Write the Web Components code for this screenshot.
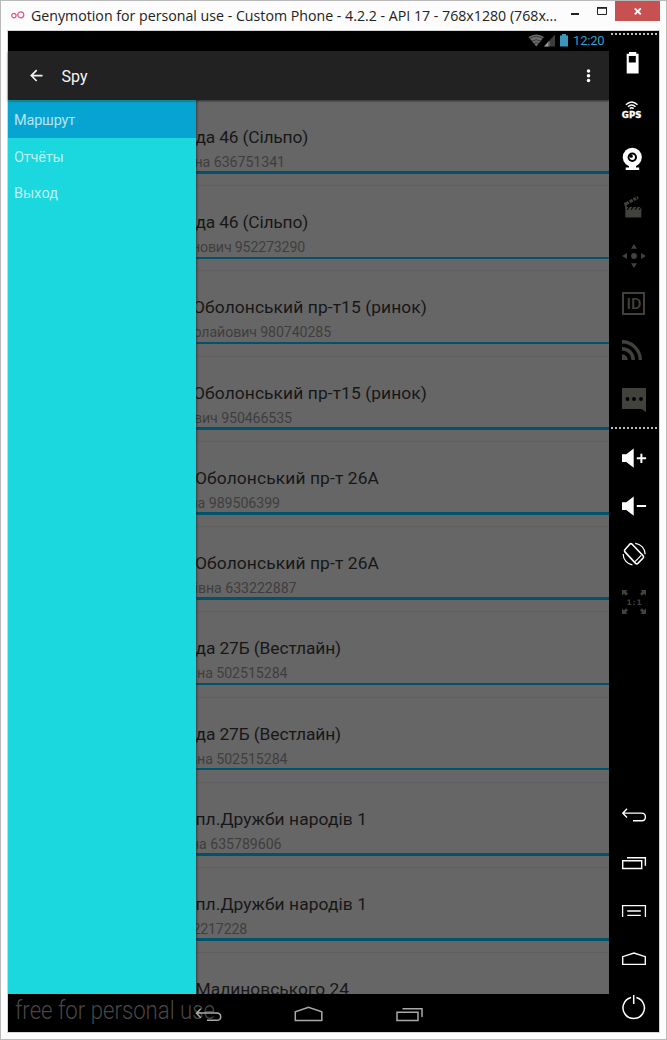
<!DOCTYPE html>
<html lang="ru">
<head>
<meta charset="utf-8">
<title>Genymotion</title>
<style>
html, body { margin: 0; height: 100%; overflow: hidden; background: #fcfcfc; font-family: Roboto, "Liberation Sans", sans-serif; }
</style>
</head>
<body>
<emulator-window></emulator-window>
<script>
function define(name, html, setup) {
  const template = document.createElement('template');
  template.innerHTML = html.trim();
  customElements.define(name, class extends HTMLElement {
    connectedCallback() {
      if (this.shadowRoot) return;
      this.attachShadow({ mode: 'open' }).append(template.content.cloneNode(true));
      if (setup) setup(this, this.shadowRoot);
    }
  });
}

/* A line of text spread to a given width, by tracking or by horizontal scaling. */
define('fit-text', `
<style>
:host { display: block; flex: none; white-space: nowrap; }
span { display: inline-block; white-space: pre; transform-origin: 0 50%; }
</style><span></span>`, (host, root) => {
  const span = root.querySelector('span');
  const text = host.getAttribute('text');
  const width = +host.getAttribute('width');
  span.textContent = text;
  const natural = span.getBoundingClientRect().width;
  if (host.hasAttribute('stretch')) span.style.transform = `scaleX(${width / natural})`;
  else span.style.letterSpacing = (width - natural) / text.length + 'px';
  host.style.width = width + 'px';
});

define('title-bar', `
<style>
:host { display: flex; height: 29px; align-items: flex-start; color: #222; }
.logo { margin: 5px 5px 0 9px; flex: none; }
fit-text { font: 15px/20px "Open Sans", "Noto Sans", sans-serif; margin-top: 4px; }
.buttons { display: flex; margin-left: auto; }
svg { display: block; flex: none; }
.close { background: #c75050; width: 45px; height: 20px; }
.box { width: 45px; height: 20px; }
</style>
<svg class="logo" width="16" height="20" fill="none" stroke="#e0567f" stroke-width="1.2"><circle cx="3.9" cy="9.6" r="2.2"/><circle cx="10.8" cy="8.8" r="3"/></svg>
<fit-text stretch width="526" text="Genymotion for personal use - Custom Phone - 4.2.2 - API 17 - 768x1280 (768x..."></fit-text>
<div class="buttons">
<svg class="box" viewBox="570 1 45 20"><path d="M571 14h8" stroke="#222" stroke-width="2"/><path d="M597.500 8h9v6.500h-9z" fill="none" stroke="#222"/><path d="M597 7.800h10" stroke="#222" stroke-width="1.600"/></svg>
<svg class="close" viewBox="615 1 45 20"><path d="M634.800 8.300l6 6m0-6l-6 6" stroke="#fff" stroke-width="1.900"/></svg>
</div>`);

define('status-bar', `
<style>
:host { display: flex; height: 20px; background: #000; justify-content: flex-end; color: #2f9fcb; }
svg { display: block; }
fit-text { font-size: 13px; line-height: 20px; margin-right: 4.500px; }
</style>
<svg width="45" height="20" viewBox="528 31 45 20">
<path d="M528.600 37q7.600-5 15.400 0l-7.700 9.500z" fill="#6f6f6f"/>
<path d="M529.500 38.600q6.800-4.200 13.600 0M531.600 41.200q4.700-3 9.400 0M533.700 43.500q2.600-1.600 5.200 0" stroke="#1b1b1b" stroke-width=".7" fill="none"/>
<path d="M555 34.500V46.500H544z" fill="#3d3d3d"/><path d="M548.500 41.600V46.500H544z" fill="#9a9a9a"/><path d="M549 41v5.500" stroke="#777"/>
<path d="M562 34h4v1.500h2V46.500h-8V35.500h2z" fill="#3d96be"/>
</svg>
<fit-text width="31.500" text="12:20"></fit-text>`);

define('action-bar', `
<style>
:host { display: flex; height: 49px; background: #222; align-items: center; color: #f5f5f5; box-shadow: 0 1px 2px #0008; position: relative; z-index: 2; }
svg { display: block; }
fit-text { font: 400 16px/20px Roboto, sans-serif; margin-top: 3px; }
.more { margin-left: auto; }
</style>
<svg width="53.500" height="49" viewBox="8 51 53.500 49"><path d="M42.500 75.600H31.500M36.700 70.200l-5.400 5.400 5.400 5.400" fill="none" stroke="#f2f2f2" stroke-width="1.700"/></svg>
<fit-text width="26" text="Spy"></fit-text>
<svg class="more" width="29" height="49" viewBox="580 51 29 49" fill="#fff"><circle cx="588.500" cy="71" r="1.750"/><circle cx="588.500" cy="75.700" r="1.750"/><circle cx="588.500" cy="80.400" r="1.750"/></svg>`);

define('drawer-item', `
<style>
:host { display: flex; height: 36.800px; box-sizing: border-box; align-items: center; padding: 2px 0 0 6px; color: #bdf0f4; font-size: 14.500px; }
:host([selected]) { background: #08a4d1; color: #b5e4f0; }
</style><slot></slot>`);

define('side-drawer', `
<style>
:host { display: block; width: 188px; flex: none; background: #1bd7de; box-shadow: 0 0 2px 1px #0006; position: relative; z-index: 1; padding-top: 1px; box-sizing: border-box; }
</style>
<drawer-item selected><fit-text width="61" text="Маршрут"></fit-text></drawer-item>
<drawer-item><fit-text width="49.500" text="Отчёты"></fit-text></drawer-item>
<drawer-item><fit-text width="44" text="Выход"></fit-text></drawer-item>`);

define('address-row', `
<style>
:host { display: flex; flex-direction: column; height: 85.230px; flex: none; box-sizing: border-box; padding-top: 25px; border-bottom: 1px solid #5f5f5f; }
.line { display: flex; justify-content: flex-end; overflow: hidden; flex: none; }
.title { height: 26px; font-size: 17.400px; line-height: 22px; color: #171717; }
.sub { height: 19.400px; font-size: 14.200px; line-height: 20.500px; color: #3e3e3e; }
.rule { height: 2.500px; background: #00536a; flex: none; }
</style>
<div class="line title"></div><div class="line sub"></div><div class="rule"></div>`, (host, root) => {
  for (const kind of ['title', 'sub']) {
    const [text, start, end] = host.getAttribute(kind).split('|');
    const line = root.querySelector('.' + kind);
    if (!text) continue;
    line.style.width = end - 196 + 'px';
    const fit = document.createElement('fit-text');
    fit.setAttribute('text', text);
    fit.setAttribute('width', end - start);
    line.append(fit);
  }
});

const addresses = [
  ['да 46 (Сільпо)|195.5|308', 'на 636751341|194.5|285'],
  ['да 46 (Сільпо)|195.5|308', 'нович 952273290|192|305'],
  ['Оболонський пр-т15 (ринок)|193|427', 'олайович 980740285|193.5|331'],
  ['Оболонський пр-т15 (ринок)|193|427', 'вич 950466535|194|292'],
  ['Оболонський пр-т 26А|195|379', 'на 989506399|189.5|280'],
  ['Оболонський пр-т 26А|195|379', 'івна 633222887|194.5|296.5'],
  ['да 27Б (Вестлайн)|195.5|341', 'вна 502515284|189|287.5'],
  ['да 27Б (Вестлайн)|195.5|341', 'вна 502515284|189|287.5'],
  ['пл.Дружби народів 1|195.5|367', 'на 635789606|191|281.5'],
  ['пл.Дружби народів 1|195.5|367', '2217228|192.5|247'],
  ['Малиновського 24|195.5|349', ''],
];

define('address-list', `
<style>
:host { display: flex; flex-direction: column; flex: 1; min-width: 0; overflow: hidden; background: #666; padding-top: 1px; }
</style>`, (host, root) => {
  for (const [title, sub] of addresses) {
    const row = document.createElement('address-row');
    row.setAttribute('title', title);
    row.setAttribute('sub', sub);
    root.append(row);
  }
});

define('nav-bar', `
<style>
:host { display: flex; height: 38px; background: #000; color: #474747; position: relative; }
fit-text { font: 300 26px/32px Roboto, sans-serif; margin-left: 6.500px; }
svg { position: absolute; left: 0; top: 0; }
</style>
<fit-text stretch width="200" text="free for personal use"></fit-text>
<svg width="601" height="38" viewBox="8 994 601 38" fill="none" stroke="#a9a9a9" stroke-width="1.500">
<path d="M200.800 1008.800l-4.300 4.400 4.300 4.500M197 1012.900H216.500q4.200 0 4.200 3.800t-4.200 3.600H207"/>
<path d="M295.300 1020.600v-8.800l13.200-4.400 13.300 4.400v8.800z"/>
<path d="M397 1012.200h21v8.200h-21zM402.500 1008.700h19.500v8.300"/>
</svg>`);

const glyphs = {
  battery: '<path fill-rule="evenodd" d="M7 1h7.300v1.700h2.300V22.500H4.700V2.700H7zM6.800 5v6.400h7V5z" fill="#fff"/>',
  gps: '<g fill="none" stroke="#fff" stroke-width="1.400"><path d="M3.900 5.800q5.800-5.600 11.600 0M5.900 7.800q3.800-3.500 7.600 0M7.800 9.600q1.900-1.600 3.800 0"/></g><text x="-.2" y="19.300" textLength="19.600" lengthAdjust="spacingAndGlyphs" font-family="DejaVu Sans, sans-serif" font-weight="bold" font-size="8.300" fill="#fff" stroke="#fff" stroke-width=".3">GPS</text>',
  camera: '<circle cx="10.300" cy="10.300" r="9.500" fill="#fff"/><circle cx="10.300" cy="10.300" r="4.700" fill="#000"/><circle cx="10.300" cy="10.300" r="2.700" fill="#fff"/><circle cx="9.200" cy="9.200" r="1.600" fill="#000"/><path d="M7 19h7v1.500h3.200V23H3.700v-2.500H7z" fill="#fff"/>',
  clapper: '<g fill="#41423b"><path d="M3.300 12H19.300V22.500H3.300z"/><path d="M2 8L15.500 1l1.300 2.800L3.500 10.800z"/><path d="M2 8l1.300 5h2L3.500 8z"/></g><path d="M7.200 11.800l-2 3M11.200 11.800l-2 3M15.200 11.800l-2 3M19 11.800l-2 3M6 5l2 3.500M10 3l2 3.500M13.300 1l2 3.500" stroke="#000" stroke-width="1.100"/>',
  move: '<g fill="#41423b"><circle cx="12" cy="13" r="2.900"/><path d="M12 1l3 4.700H9zM12 25l3-4.700H9zM0 13l5-3v6zM24 13l-5-3v6z"/></g>',
  id: '<path d="M1 2h21v21H1z" fill="none" stroke="#41423b" stroke-width="2"/><text x="4.500" y="18.200" textLength="15" lengthAdjust="spacingAndGlyphs" font-family="Roboto, sans-serif" font-weight="500" font-size="15.500" fill="#41423b">ID</text>',
  rss: '<g fill="none" stroke="#41423b"><path d="M0 2.800A18.300 18.300 0 0 1 18.300 21" stroke-width="3.400"/><path d="M0 9.800A11.300 11.300 0 0 1 11.300 21" stroke-width="3.400"/></g><path d="M0 15.200A5.800 5.800 0 0 1 5.800 21H0z" fill="#41423b"/>',
  chat: '<path d="M0 1h24v24l-4.500-3H0z" fill="#41423b"/><g fill="#000"><circle cx="5.500" cy="12" r="1.900"/><circle cx="12" cy="12" r="1.900"/><circle cx="19" cy="12" r="1.900"/></g>',
  louder: '<path d="M0 8.300h4.300L11.700 2.600v19.200L4.300 16H0z" fill="#fff"/><path d="M14.800 12.300h9.300M19.400 7.700v9.200" stroke="#fff" stroke-width="2"/>',
  quieter: '<path d="M0 8.300h4.300L11.700 2.600v19.200L4.300 16H0z" fill="#fff"/><path d="M14.800 12h9.300" stroke="#fff" stroke-width="2"/>',
  rotate: '<g transform="translate(.7 .4)" fill="none" stroke="#fff"><path d="M9.200 1.600L20.400 13.300q1 1.200 0 2.300L15.200 21q-1.200 1-2.300 0L2.200 9.500q-.9-1.100 0-2.200L7 1.800q1-1 2.200-.2z" stroke-width="1.600"/><path d="M12.300 19.200l6.200-6.300" stroke-width="1.200"/><path d="M12.500.9A11 11 0 0 1 22.500 11.800M.5 11.500A11 11 0 0 0 9.700 22.500" stroke-width="1.200"/></g>',
  scale: '<g fill="#41423b"><path d="M0 0h5.500L4 1.700 6 3.700 4 5.700 2 3.700 0 5.500zM24 0v5.500L22 3.700 20 5.700 18 3.700 20 1.700 18.500 0zM0 24v-5.500L2 20.300l2-2 2 2-2 2L5.500 24zM24 24h-5.500L20 22.300l-2-2 2-2 2 2 2-1.800z"/></g><text x="4.600" y="15" textLength="15" font-family="DejaVu Sans, sans-serif" font-weight="bold" font-size="7.500" fill="#41423b">1:1</text>',
  back: '<path d="M5 5.800L.8 10.200 5 14.600M1.500 10.100H19.500q3.900 0 3.900 3.900t-3.900 3.700H11" fill="none" stroke="#fff" stroke-width="1.400"/>',
  recents: '<path d="M.7 9.700h19v7.800H.7zM5 6.700h18.400v8" fill="none" stroke="#fff" stroke-width="1.400"/>',
  menu: '<path d="M.6 18V6.600h22.800V18M5.300 12h13.500M5.300 16.300h13.500" fill="none" stroke="#fff" stroke-width="1.300"/>',
  home: '<path d="M.7 17.400V9.700L12 6l11.300 3.700v7.700z" fill="none" stroke="#fff" stroke-width="1.400"/>',
  power: '<path d="M9 2.500A10.700 10.700 0 1 0 14.400 2.500M11.700 0v9" fill="none" stroke="#fff" stroke-width="1.500"/>',
};

define('tool-button', `
<style>
:host { display: flex; height: 48px; flex: none; align-items: center; justify-content: center; }
svg { display: block; overflow: visible; }
</style><svg width="24" height="24" viewBox="0 0 24 24"></svg>`, (host, root) => {
  root.querySelector('svg').innerHTML = glyphs[host.getAttribute('icon')];
});

define('tool-strip', `
<style>
:host { display: flex; flex-direction: column; width: 50px; height: 1001px; background: #000; }
.dots { height: 2px; margin: 2px 1px 4px 2px; background: repeating-linear-gradient(90deg, #bdbdbd 0 2px, transparent 2px 4px); flex: none; }
.second { margin: 4px 1px 5px 2px; }
.bottom { margin-top: auto; padding-bottom: 1px; }
</style>
<div class="dots"></div>
<div><tool-button icon="battery"></tool-button><tool-button icon="gps"></tool-button><tool-button icon="camera"></tool-button><tool-button icon="clapper"></tool-button><tool-button icon="move"></tool-button><tool-button icon="id"></tool-button><tool-button icon="rss"></tool-button><tool-button icon="chat"></tool-button></div>
<div class="dots second"></div>
<div><tool-button icon="louder"></tool-button><tool-button icon="quieter"></tool-button><tool-button icon="rotate"></tool-button><tool-button icon="scale"></tool-button></div>
<div class="bottom"><tool-button icon="back"></tool-button><tool-button icon="recents"></tool-button><tool-button icon="menu"></tool-button><tool-button icon="home"></tool-button><tool-button icon="power"></tool-button></div>`);

define('phone-screen', `
<style>
:host { display: flex; flex-direction: column; width: 601px; height: 1001px; background: #000; }
.body { display: flex; height: 894px; overflow: hidden; }
</style>
<status-bar></status-bar><action-bar></action-bar>
<div class="body"><side-drawer></side-drawer><address-list></address-list></div>
<nav-bar></nav-bar>`);

define('emulator-window', `
<style>
:host { display: block; box-sizing: border-box; width: 667px; height: 1040px; border: 1px solid #b9b9b9; background: #fcfcfc; }
title-bar { margin-right: 6px; }
.frame { display: flex; width: 651px; height: 1001px; margin-left: 6px; border: 1px solid #d4d4d4; }
</style>
<title-bar></title-bar>
<div class="frame"><phone-screen></phone-screen><tool-strip></tool-strip></div>`);
</script>
</body>
</html>
